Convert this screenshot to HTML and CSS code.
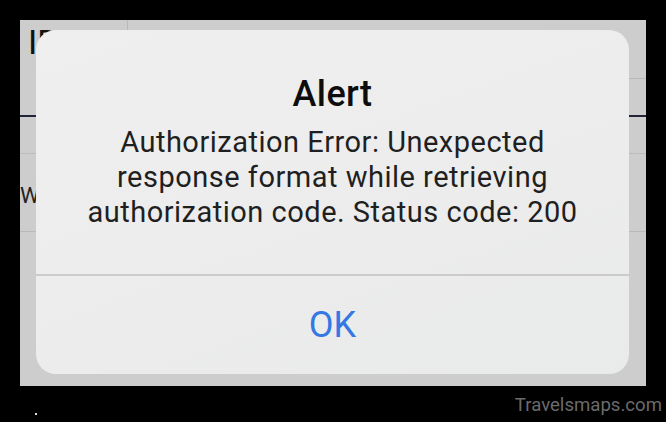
FILE: index.html
```html
<!DOCTYPE html>
<html lang="en">

<head>
    <meta charset="UTF-8">
    <meta name="viewport" content="width=device-width, initial-scale=1.0">
    <title>Alert</title>
    <link rel="stylesheet" href="styles.css">
</head>

<body>
    <div class="frame">
        <div class="photo">
            <!-- the table behind the alert -->
            <div class="table">
                <div class="thead">
                    <div class="head-cells">
                        <div class="cell cell-id">ID</div>
                        <div class="cell cell-name">ti  le    Signature  t d</div>
                    </div>
                    <div class="head-sub"></div>
                </div>
                <div class="row row-short"></div>
                <div class="row row-tall">
                    <div class="cell-w">W</div>
                </div>
                <div class="row row-last"></div>
            </div>

            <div class="alert">
                <div class="alert-body">
                    <h1 class="alert-title">Alert</h1>
                    <p class="alert-msg">Authorization Error: Unexpected<br>response format while retrieving<br>authorization code. Status code: 200</p>
                </div>
                <div class="alert-action">OK</div>
            </div>
        </div>

        <div class="footer">
            <span class="speck"></span>
            <span class="mark">Travelsmaps.com</span>
        </div>
    </div>
</body>

</html>
```

FILE: styles.css
```css
* {
    box-sizing: border-box;
    margin: 0;
    padding: 0;
    font-family: Roboto, "Liberation Sans", sans-serif;
}

body {
    background: #000;
    width: 666px;
    height: 422px;
    overflow: hidden;
}

.frame {
    padding: 20px 20px 0 20px;
}

.photo {
    position: relative;
    width: 626px;
    height: 366px;
    background: #cdcdcd;
    overflow: hidden;
}

/* table behind */
.table {
    display: flex;
    flex-direction: column;
    height: 100%;
}

.thead {
    height: 97px;
    border-bottom: 2px solid #22243a;
    display: flex;
    flex-direction: column;
}

.head-cells {
    height: 58px;
    display: flex;
}

.cell {
    color: #111;
    font-size: 34px;
    line-height: 40px;
    padding-top: 2px;
    white-space: pre;
}

.cell-id {
    width: 108px;
    padding-left: 8px;
    border-right: 1px solid #b9b9b9;
}

.cell-name {
    padding-left: 22px;
    padding-top: 3px;
    letter-spacing: 4px;
}

.head-sub {
    margin-left: 560px;
    border-top: 1px solid #b8b8b8;
}

.row {
    border-bottom: 1px solid #b9b9b9;
    display: flex;
    align-items: center;
}

.row-short {
    height: 37px;
    border-bottom-color: #bcbcbc;
}

.row-tall {
    height: 78px;
}

.row-last {
    flex: 1;
    border-bottom: none;
}

.cell-w {
    color: #222;
    font-size: 22px;
    margin-top: 6px;
}

/* the alert over the table */
.alert {
    position: absolute;
    left: 16px;
    top: 10px;
    width: 593px;
    height: 344px;
    background: linear-gradient(160deg, #efefef, #ececec 60%, #e9eaea);
    border-radius: 20px;
    display: flex;
    flex-direction: column;
}

.alert-body {
    padding-top: 44px;
    height: 246px;
    border-bottom: 2px solid #cbcbcb;
    text-align: center;
}

.alert-title {
    font-size: 36px;
    line-height: 40px;
    font-weight: 500;
    letter-spacing: 0.4px;
    color: #0d0d0d;
}

.alert-msg {
    margin-top: 11px;
    font-size: 29px;
    line-height: 35px;
    letter-spacing: 0.5px;
    color: #1f1f1f;
}

.alert-action {
    flex: 1;
    display: flex;
    align-items: center;
    justify-content: center;
    font-size: 36px;
    color: #3478e4;
}

.footer {
    height: 36px;
    display: flex;
    align-items: center;
    justify-content: space-between;
    padding-top: 2px;
}

.speck {
    width: 2px;
    height: 2px;
    margin-left: 15px;
    margin-top: 18px;
    background: #ddd;
}

.mark {
    font-size: 18.6px;
    color: #6b6b6b;
    margin-right: -16px;
}
```
